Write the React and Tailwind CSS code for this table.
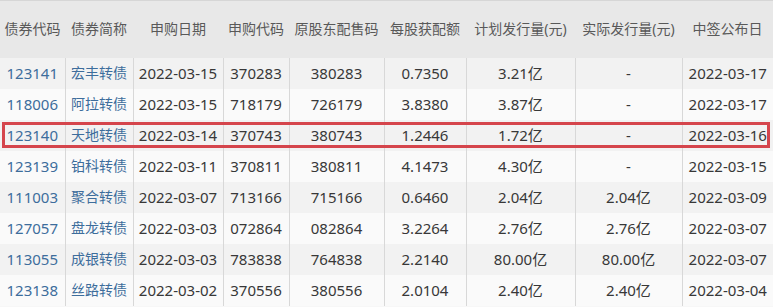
import React from "react";

const headers = ["债券代码","债券简称","申购日期","申购代码","原股东配售码","每股获配额","计划发行量(元)","实际发行量(元)","中签公布日"];
const widths = [65,68,90,66,95,82,109,107,91];
const rows = [
  ["123141","宏丰转债","2022-03-15","370283","380283","0.7350","3.21亿","-","2022-03-17"],
  ["118006","阿拉转债","2022-03-15","718179","726179","3.8380","3.87亿","-","2022-03-17"],
  ["123140","天地转债","2022-03-14","370743","380743","1.2446","1.72亿","-","2022-03-16"],
  ["123139","铂科转债","2022-03-11","370811","380811","4.1473","4.30亿","-","2022-03-15"],
  ["111003","聚合转债","2022-03-07","713166","715166","0.6460","2.04亿","2.04亿","2022-03-09"],
  ["127057","盘龙转债","2022-03-03","072864","082864","3.2264","2.76亿","2.76亿","2022-03-07"],
  ["113055","成银转债","2022-03-03","783838","764838","2.2140","80.00亿","80.00亿","2022-03-07"],
  ["123138","丝路转债","2022-03-02","370556","380556","2.0104","2.40亿","2.40亿","2022-03-04"],
];

export default function App() {
  return (
    <div className="relative w-[773px] h-[307px] overflow-hidden bg-[#f7f7f7]" style={{fontFamily: '"Noto Sans", "Noto Sans CJK SC", sans-serif'}}>
      <table className="table-fixed border-collapse w-[773px]">
        <colgroup>
          {widths.map((w, i) => <col key={i} style={{ width: w }} />)}
        </colgroup>
        <thead>
          <tr className="h-[57px] bg-[#e8e8e8] border-t border-[#d6d6d6]">
            {headers.map((h, i) => (
              <th key={i} className="font-normal text-[14px] text-[#595959] text-center whitespace-nowrap p-0 leading-none">{h}</th>
            ))}
          </tr>
        </thead>
        <tbody>
          {rows.map((r, ri) => (
            <tr key={ri} className={`h-[31px] ${ri % 2 === 0 ? "bg-[#f2f2f2]" : "bg-[#fafafa]"}`}>
              {r.map((c, ci) => (
                <td key={ci} className={`p-0 text-center whitespace-nowrap leading-none ${ci > 0 ? "border-l border-[#d8d8d8]" : ""} ${ci === 1 ? "text-[14px]" : "text-[15px]"} ${ci < 2 ? "text-[#3d6d9c]" : "text-[#383838]"}`}>
                  {c}
                </td>
              ))}
            </tr>
          ))}
        </tbody>
      </table>
      <div className="absolute left-[2px] top-[122px] w-[768px] h-[26px] border-[3px] border-[#d5454c] pointer-events-none" />
    </div>
  );
}
